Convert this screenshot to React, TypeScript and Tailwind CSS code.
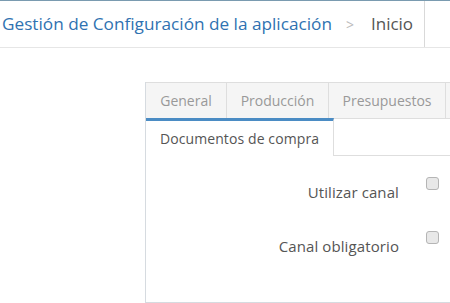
export default function App() {
  const rows = ["Utilizar canal", "Canal obligatorio"]
  return (
    <div className="w-[450px] h-[303px] overflow-hidden bg-white font-['Open_Sans',sans-serif]">
      <div className="flex h-[48px] border-t border-b border-t-[#7a9bb0] border-b-[#e6e6e6]">
        <div className="flex w-[425px] shrink-0 items-center border-r border-[#d9d9d9] pl-[2px]">
          <span className="text-[17.2px] text-[#2f72b1]">Gestión de Configuración de la aplicación</span>
          <span className="ml-[14px] text-[14px] text-[#bbb]">&gt;</span>
          <span className="ml-[17px] text-[17px] text-[#555]">Inicio</span>
        </div>
      </div>

      <div className="ml-[145px] mt-[34px] h-[221px] w-[400px] border-l border-b border-[#d6dbe0]">
        <div className="flex h-[37px] border-t border-b border-[#dedede] bg-[#f5f5f5] text-[14px] text-[#999]">
          <div className="flex w-[81px] items-center justify-center border-r border-[#dedede]">General</div>
          <div className="flex w-[102px] items-center justify-center border-r border-[#dedede]">Producción</div>
          <div className="flex w-[117px] items-center justify-center border-r border-[#dedede]">Presupuestos</div>
          <div className="flex w-[80px] items-center justify-center border-r border-[#dedede]"></div>
        </div>
        <div className="-mt-[1px] flex h-[38px]">
          <div className="flex w-[188px] items-center justify-center border-t-[3px] border-r border-t-[#4b8cc4] border-r-[#dedede] bg-white pb-[1px] text-[14px] tracking-[0.1px] text-[#555]">
            Documentos de compra
          </div>
          <div className="flex-1 border-b border-[#dedede]"></div>
        </div>

        <div className="flex flex-col gap-[28px] pt-[21px]">
          {rows.map((r) => (
            <div key={r} className="flex h-[26px] w-[305px] items-start">
              <span className="mt-[4px] w-[253px] text-right text-[15px] leading-[22px] tracking-[0.1px] text-[#555]">{r}</span>
              <span className="ml-[27px] h-[13px] w-[13px] rounded-[3px] border border-[#b5b5b5] bg-[#e8e8e8]"></span>
            </div>
          ))}
        </div>
      </div>
    </div>
  )
}
